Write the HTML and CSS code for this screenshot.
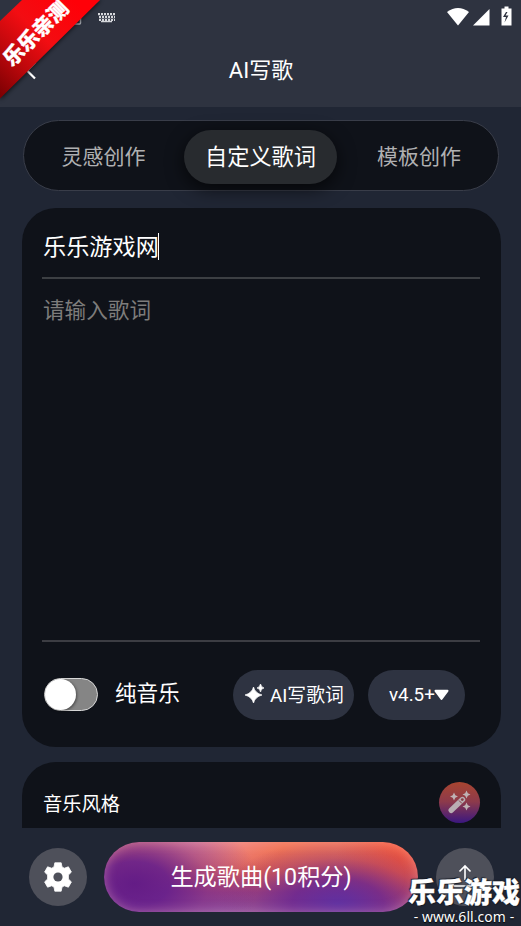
FILE: index.html
```html
<!DOCTYPE html>
<html lang="zh-CN">
<head>
<meta charset="utf-8">
<title>AI写歌</title>
<link rel="stylesheet" href="styles.css">
</head>
<body>
<div class="app">
  <header class="header">
    <div class="status">
      <svg class="status-left" width="60" height="18" viewBox="0 0 60 18">
        <rect x="13" y="6" width="7.500" height="8" rx="1" fill="none" stroke="#a9adb4" stroke-width="1.500"/>
        <g stroke="#d5d7db" stroke-width="2" stroke-dasharray="2 1"><path d="M38 4h17M39 7h16M39 10h16" /></g>
        <path d="M41 11.500h11" stroke="#d5d7db" stroke-width="1.500"/>
        <path d="M38 5.500h17M39 8.500h16" stroke="#8e939d" stroke-width=".5"/>
      </svg>
      <svg class="status-right" width="70" height="22" viewBox="0 0 70 22">
        <path d="M2 7Q13 -1 24 7L13 20.500Z" fill="#fff"/>
        <path d="M28 20.500L44.500 4V20.500Z" fill="#fff"/>
        <path d="M59.500 1.500h4v2h3V20.500h-10V3.500h3Z" fill="#fff"/>
        <path d="M61 7l-3 5h3l-1.500 5.500 4-7h-3l2-3.500Z" fill="#2e3340"/>
      </svg>
    </div>
    <h1 class="title">AI写歌</h1>
    <svg class="back" width="14" height="22" viewBox="0 0 14 22"><path d="M11 2L3 10l8 8" transform="translate(0 -.5)" fill="none" stroke="#fff" stroke-width="2.200"/></svg>
  </header>

  <main class="content">
    <nav class="tabs">
      <a class="tab">灵感创作</a>
      <a class="tab active">自定义歌词</a>
      <a class="tab last">模板创作</a>
    </nav>

    <section class="card editor">
      <div class="song-name">乐乐游戏网<i class="caret"></i></div>
      <div class="lyrics">请输入歌词</div>
      <div class="tools">
        <span class="switch"><i class="knob"></i></span>
        <span class="switch-label">纯音乐</span>
        <button class="pill write">
          <svg width="20" height="20" viewBox="0 0 20 20" fill="#fff"><path d="M8.500 3Q10 9 17 11Q10 13 8.500 19Q7 13 0 11Q7 9 8.500 3ZM15.500 0Q16 3 19 4Q16 4.500 15.500 8Q15 4.500 12 4Q15 3 15.500 0Z" stroke="#fff" stroke-width=".7"/></svg>
          <span>AI写歌词</span>
        </button>
        <button class="pill version">v4.5+<svg width="15" height="12" viewBox="0 0 15 12"><path d="M1.500 1.800h12L7.500 10Z" fill="#fff" stroke="#fff" stroke-width="2" stroke-linejoin="round"/></svg></button>
      </div>
    </section>

    <section class="card style-card">
      <span class="style-name">音乐风格</span>
      <span class="wand">
        <svg width="40" height="40" viewBox="0 0 40 40">
          <path d="M12.200 28.300L23.500 17.500" stroke="#b9aeb3" stroke-width="5.400" stroke-linecap="round"/>
          <circle cx="23.300" cy="17.600" r="1.400" fill="#874047"/>
          <path d="M20 18.500l3 3" stroke="#874047" stroke-width="1"/>
          <g fill="#bfb3b5"><path d="M15 10.500l1.300 2.700 2.700 1.300-2.700 1.300-1.300 2.700-1.300-2.700-2.700-1.300 2.700-1.300Z"/><path d="M27.500 8.500l1.300 2.700 2.700 1.300-2.700 1.300-1.300 2.700-1.300-2.700-2.700-1.300 2.700-1.300ZM27.500 20.500l1.300 2.700 2.700 1.300-2.700 1.300-1.300 2.700-1.300-2.700-2.700-1.300 2.700-1.300Z"/></g>
        </svg>
      </span>
    </section>
  </main>

  <footer class="footer">
    <span class="round">
      <svg width="30" height="30" viewBox="0 0 30 30" fill="#fff">
        <path d="M11.800.8h6.400l.8 4.100 2.300 1.300 4.100-1.400 3 5.300-3 2.900v4l3 2.900-3 5.300-4.100-1.400-2.300 1.300-.8 4.100h-6.400l-.8-4.100-2.300-1.300-4.100 1.400-3-5.300 3-2.900v-4l-3-2.900 3-5.300 4.100 1.400L11 4.900Z" stroke="#fff" stroke-width=".8" stroke-linejoin="round"/>
        <circle cx="15" cy="15" r="4.600" fill="#4e505a"/>
      </svg>
    </span>
    <button class="generate">生成歌曲(10积分)</button>
    <span class="round">
      <svg width="32" height="32" viewBox="0 0 32 32" fill="none" stroke="#fff" stroke-width="1.600"><path d="M16 19V5M10.500 10.500L16 5l5.500 5.500M4 19v6h24v-6"/></svg>
    </span>
  </footer>

  <svg class="ribbon" width="106" height="106" viewBox="0 0 106 106">
    <defs>
      <linearGradient id="red" gradientUnits="userSpaceOnUse" x1="0" y1="95" x2="82" y2="8"><stop offset="0" stop-color="#7d0003"/><stop offset=".3" stop-color="#bd080c"/><stop offset=".6" stop-color="#f30d12"/><stop offset="1" stop-color="#ff0008"/></linearGradient>
      <filter id="soft" x="-20%" y="-20%" width="140%" height="140%"><feGaussianBlur stdDeviation="2"/></filter>
    </defs>
    <path d="M0 100L101 0H60L0 60Z" fill="#000" opacity=".65" filter="url(#soft)"/>
    <path d="M22 0H100L0 98.500V21Z" fill="url(#red)"/>
    <text class="ribbon-text" transform="translate(12 67.500) rotate(-45)">乐乐亲测</text>
  </svg>

  <div class="watermark">
    <div class="mark-name">乐乐游戏</div>
    <div class="mark-url">- www.6ll.com -</div>
  </div>
</div>
</body>
</html>
```
FILE: styles.css
```css
* { box-sizing: border-box; }
body {
  margin: 0;
  background: #202634;
  color: #fff;
  font-family: Roboto, "Noto Sans CJK SC", sans-serif;
}
button { border: 0; padding: 0; color: inherit; font: inherit; }
svg { display: block; flex: none; }
.app {
  position: relative;
  width: 521px;
  height: 926px;
  overflow: hidden;
  display: flex;
  flex-direction: column;
}
.header { position: relative; height: 107px; flex: none; background: #2e3340; }
.status { display: flex; justify-content: space-between; height: 35px; padding: 5px 10px 0 60px; }
.status-left { margin-top: 5px; }
.status-right { width: 70px; margin-right: -3.500px; }
.title { margin: 18px 0 0; padding-left: 1px; text-align: center; font-size: 22px; font-weight: 400; line-height: 36px; }
.back { position: absolute; left: 24px; top: 61px; }

.content { flex: none; height: 721px; overflow: hidden; padding: 13px 20px 0 22px; display: flex; flex-direction: column; }
.tabs {
  flex: none;
  height: 71px;
  margin: 0 2px 17px 1px;
  border: 1px solid #393d49;
  border-radius: 36px;
  background: #0f1219;
  display: grid;
  grid-template-columns: 160px 153px 1fr;
  align-items: center;
}
.tab { padding-top: 2px; padding-right: 1px; text-align: center; font-size: 21px; line-height: 54px; color: #afb0b2; }
.tab.active {
  margin-top: 3px;
  padding: 0;
  border-radius: 27px;
  background: #282b2f;
  color: #fff;
  font-size: 22.200px;
  box-shadow: 0 5px 18px rgba(0, 0, 0, .65);
}
.tab.last { padding-left: 3px; padding-right: 0; }
.card { flex: none; width: 479px; border-radius: 34px; background: #0f1219; }
.editor { height: 539px; padding: 0 21px 0 20px; display: flex; flex-direction: column; }
.song-name {
  height: 71px;
  padding: 5px 0 0 1px;
  border-bottom: 2px solid #3c3f43;
  display: flex;
  align-items: center;
  font-size: 23.200px;
}
.caret { width: 1px; height: 27px; background: #fff; margin: 2px 0 0 -1px; }
.lyrics { height: 363px; border-bottom: 2px solid #3c3d43; padding: 14px 1px; font-size: 21.600px; line-height: 36px; color: #7d7c7b; }
.tools { display: flex; align-items: center; height: 105px; padding-left: 2px; }
.switch { width: 54px; height: 33px; border: 1px solid #d7d7d7; border-radius: 17px; background: #858585; }
.knob { display: block; width: 31px; height: 31px; border-radius: 50%; background: #fff; box-shadow: 1px 1px 3px rgba(0, 0, 0, .45); }
.switch-label { width: 118px; padding-left: 17px; padding-bottom: 1px; font-size: 21.600px; line-height: 30px; }
.pill { height: 50px; border-radius: 25px; background: #2e3341; display: flex; align-items: center; white-space: nowrap; }
.write { width: 121px; margin-left: 17px; padding-left: 12px; gap: 5px; font-size: 18.800px; }
.write span { padding-bottom: 2px; }
.write svg { margin-top: -2px; }
.version { width: 97px; margin-left: 14px; padding-left: 21px; font-size: 18.800px; }
.version svg { margin-left: -1px; margin-top: 1px; }
.style-card { margin-top: 15px; height: 100px; padding: 20px 21px 0; display: flex; justify-content: space-between; font-size: 19.300px; line-height: 44px; }
.style-name { padding-top: 1px; }
.wand { width: 41px; height: 41px; border-radius: 50%; background: linear-gradient(#a84530, #8d3a4b 48%, #3b1780); }

.footer { height: 98px; padding: 0 27px 0 29px; display: flex; align-items: center; justify-content: space-between; }
.round { width: 58px; height: 58px; border-radius: 50%; background: #4e505a; display: grid; place-items: center; }
.generate {
  width: 314px;
  height: 70px;
  margin-right: 1px;
  padding-bottom: 4px;
  border-radius: 35px;
  font-size: 23.200px;
  background:
    radial-gradient(ellipse 125px 80px at 30px 42px, #641c86 0%, rgba(103, 32, 140, .92) 28%, rgba(125, 45, 140, .5) 60%, rgba(140, 55, 140, 0) 100%),
    radial-gradient(ellipse 120px 65px at 234px 62px, #6030a0 0%, rgba(105, 38, 145, .8) 38%, rgba(130, 50, 130, .35) 70%, rgba(140, 55, 130, 0) 100%),
    radial-gradient(ellipse 90px 40px at 90px 0, #ee8f98 0%, rgba(235, 120, 130, 0) 100%),
    radial-gradient(ellipse 65px 65px at 296px 18px, #f0553a 0%, rgba(239, 84, 57, 0) 100%),
    linear-gradient(#f27555 10%, #dc5d50 42%, #9a4080 72%, #8850a3 100%);
  box-shadow: inset 0 0 12px rgba(255, 190, 200, .4);
}

.ribbon { position: absolute; left: 0; top: 0; }
.ribbon-text { font: 900 20.500px "Noto Sans CJK SC", sans-serif; fill: #fff; stroke: #fff; stroke-width: .3px; }
.watermark { position: absolute; left: 407px; top: 875px; width: 114px; color: #fff; text-align: center; }
.mark-name {
  font: 900 28px/33px "Noto Sans CJK SC", sans-serif;
  white-space: nowrap;
  -webkit-text-stroke: .3px #fff;
  text-shadow: 1px 1px 1px #171b25, -1px -1px 1px #171b25;
}
.mark-url { font: 400 13.900px/18px "Noto Sans", sans-serif; white-space: nowrap; text-shadow: 0 1px 1px #000; letter-spacing: .1px; }
```
